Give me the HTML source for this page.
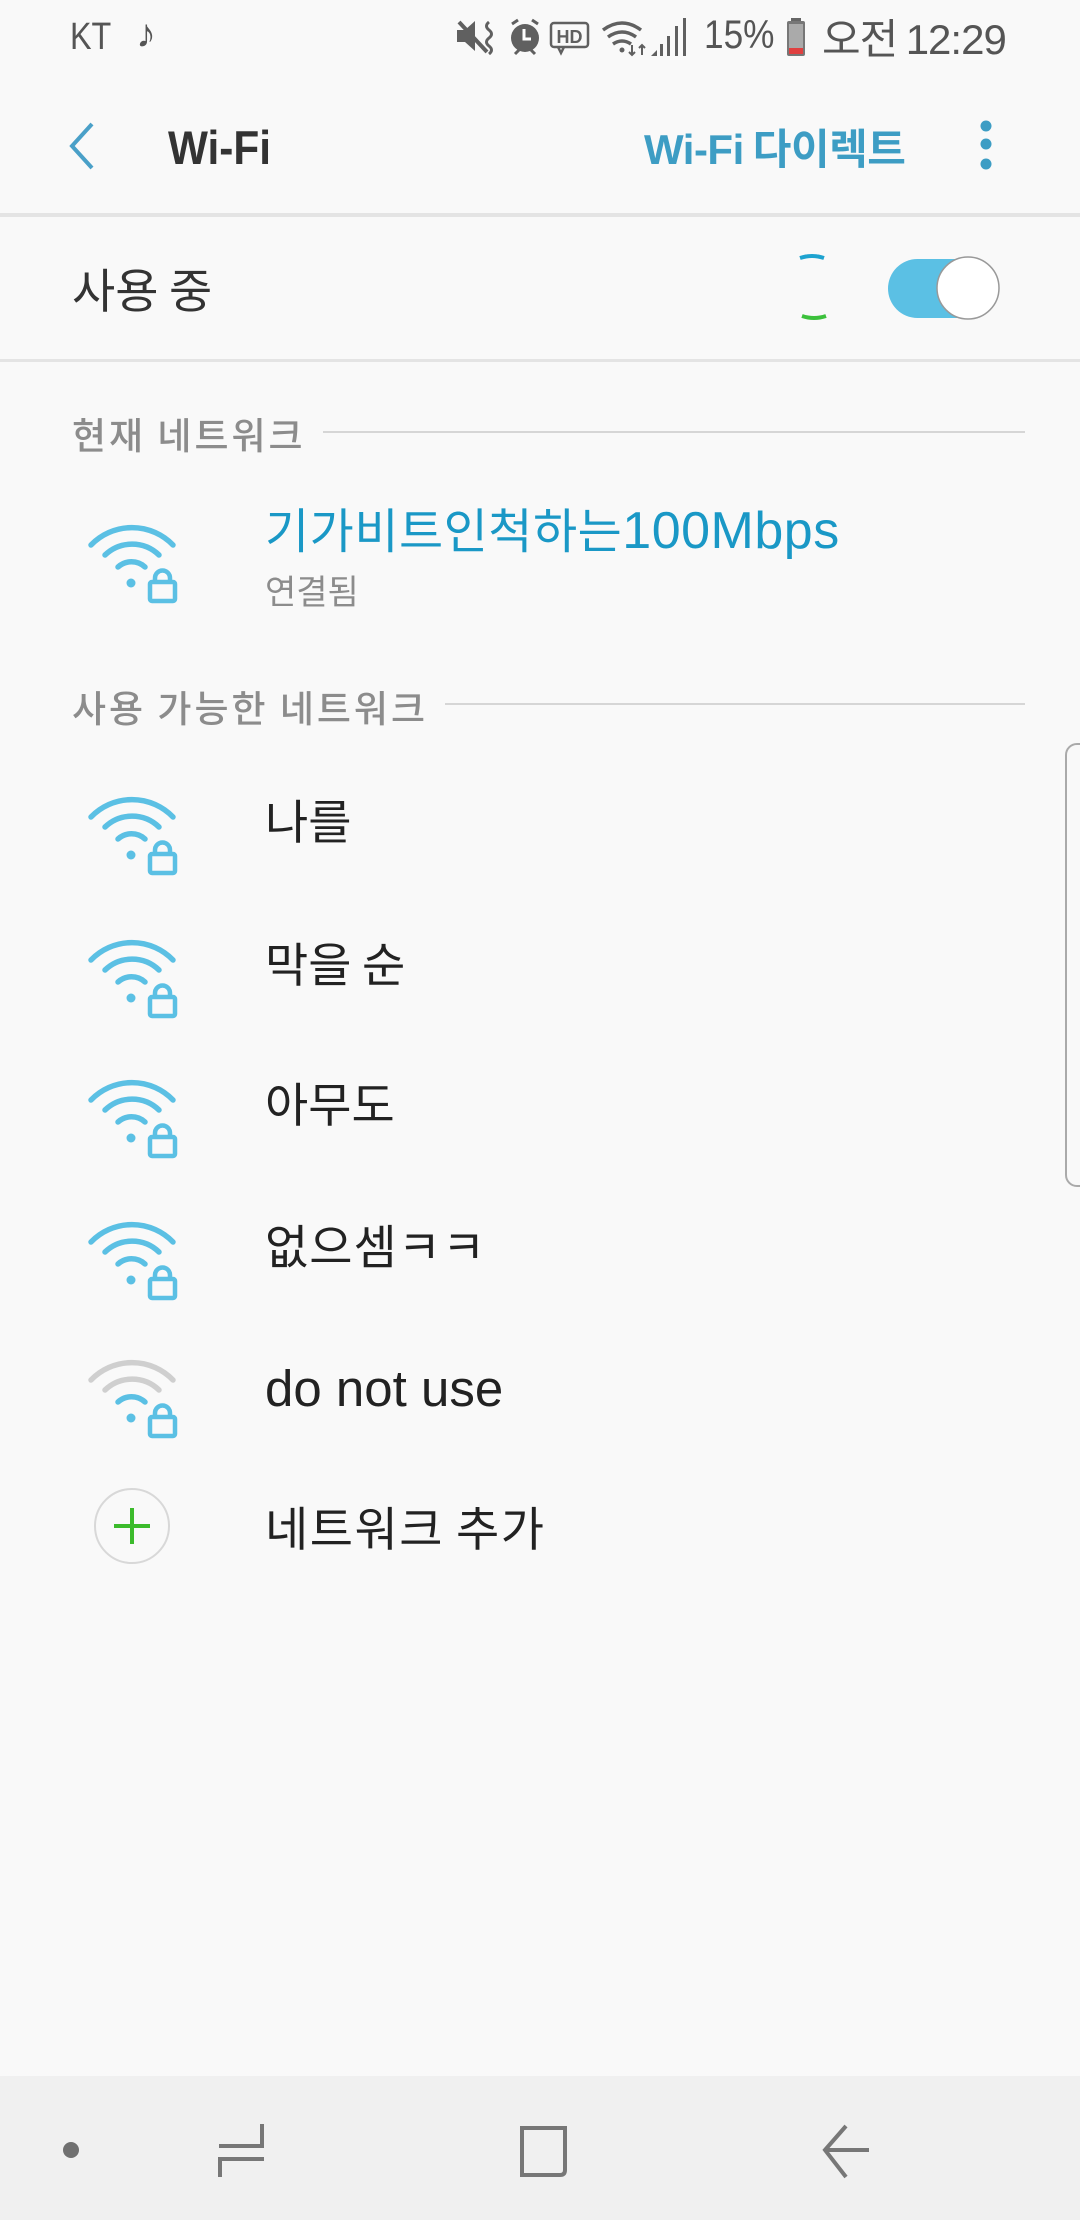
<!DOCTYPE html>
<html><head><meta charset="utf-8"><style>
*{margin:0;padding:0;box-sizing:border-box}
body{width:1080px;height:2220px;background:#f9f9f9;position:relative;overflow:hidden;font-family:"Liberation Sans","Noto Sans CJK KR",sans-serif}
.a{position:absolute;white-space:nowrap}
.k{font-family:"Noto Sans CJK KR","Liberation Sans",sans-serif}
.sec{font-size:37px;color:#8c8c8c;font-weight:500;line-height:1;letter-spacing:3px}
.item{left:265px;font-size:47px;color:#222;line-height:1}
.ln{position:absolute;height:2px;background:#d6d6d6}
</style></head><body>
<!-- status bar -->
<div class="a" style="left:70px;top:16px;font-size:38px;color:#555;transform:scaleX(.85);transform-origin:left">KT</div>
<div class="a" style="left:136px;top:12px;font-size:40px;color:#555">♪</div>
<svg class="a" style="left:455px;top:18px" width="240" height="40" viewBox="0 0 240 40">
<g fill="#606060" stroke="#606060">
<path d="M2 12h8l10-9v30l-10-9H2z" stroke="none"/><path d="M4 4l28 30" stroke-width="4" fill="none"/><path d="M34 4q-5 4 0 8t0 8 0 8 0 8" stroke-width="3" fill="none"/>
<circle cx="70" cy="20" r="14" stroke="none"/><path d="M57 6l6-4M83 6l-6-4M60 36l4-4M80 36l-4-4" stroke-width="3"/><path d="M69 11v10h7" stroke="#fff" stroke-width="3" fill="none"/>
<rect x="96" y="5" width="37" height="24" rx="3" fill="none" stroke-width="2.5"/><path d="M103 29l3 6 3-6" fill="none" stroke-width="2.5"/>
<text x="114.5" y="25" font-size="18" font-weight="bold" text-anchor="middle" stroke="none" font-family="Liberation Sans">HD</text>
<path d="M148 12q19-14 38 0M153 19q14-10 28 0M158 26q9-6 18 0" fill="none" stroke-width="3.5"/><circle cx="167" cy="32" r="2.5" stroke="none"/>
<path d="M177 27v10M174 34l3 3 3-3M187 37v-10M184 30l3-3 3 3" fill="none" stroke-width="2"/>
<path d="M196 38l6-6v6z" stroke="none"/><rect x="205" y="26" width="3" height="12" stroke="none"/><rect x="212" y="18" width="3" height="20" stroke="none"/><rect x="220" y="8" width="3" height="30" stroke="none"/><rect x="228" y="0" width="3" height="38" stroke="none"/>
</g></svg>
<div class="a" style="left:704px;top:13px;font-size:40px;color:#555;transform:scaleX(.88);transform-origin:left">15%</div>
<svg class="a" style="left:786px;top:18px" width="20" height="38"><rect x="5" y="0" width="10" height="4" fill="#666"/><rect x="1" y="3" width="18" height="35" rx="2" fill="#777"/><rect x="3" y="6" width="14" height="24" fill="#aaa"/><rect x="3" y="30" width="14" height="6" fill="#e04040"/></svg>
<div class="a k" style="left:822px;top:6px;font-size:42px;color:#555;letter-spacing:-1px">오전 <span style="font-family:'Liberation Sans';font-size:42px">12:29</span></div>
<!-- header -->
<svg class="a" style="left:64px;top:120px" width="36" height="52"><path d="M28 4L8 26l20 22" fill="none" stroke="#4aa0c8" stroke-width="4"/></svg>
<div class="a" style="left:168px;top:120px;font-size:47px;font-weight:bold;color:#333;transform:scaleX(.9);transform-origin:left">Wi-Fi</div>
<div class="a k" style="left:644px;top:116px;font-size:42px;font-weight:bold;color:#3d9dc4;letter-spacing:-0.5px"><span style="font-family:'Liberation Sans'">Wi-Fi</span> 다이렉트</div>
<svg class="a" style="left:978px;top:120px" width="16" height="50"><circle cx="8" cy="6" r="5.5" fill="#3d9dc4"/><circle cx="8" cy="24" r="5.5" fill="#3d9dc4"/><circle cx="8" cy="44" r="5.5" fill="#3d9dc4"/></svg>
<div class="a" style="left:0;top:213px;width:1080px;height:4px;background:#e4e4e4"></div>
<!-- 사용 중 -->
<div class="a k" style="left:72px;top:264px;font-size:47px;color:#333;line-height:1">사용 중</div>
<svg class="a" style="left:780px;top:240px" width="240" height="100">
<path d="M20 18q12-4 24 0" fill="none" stroke="#1ea3d0" stroke-width="4"/><path d="M22 76q12 4 24 0" fill="none" stroke="#3cc13c" stroke-width="4"/>
<rect x="108" y="19" width="100" height="59" rx="29.5" fill="#5bc0e4"/>
<circle cx="188" cy="48" r="31" fill="#fff" stroke="#999" stroke-width="1.5"/>
</svg>
<div class="a" style="left:0;top:359px;width:1080px;height:3px;background:#e4e4e4"></div>
<!-- current -->
<div class="a sec k" style="left:72px;top:415px">현재 네트워크</div>
<div class="ln" style="left:323px;top:431px;width:702px"></div>
<div class="a k" style="left:265px;top:503px;font-size:48px;color:#1a98c6;line-height:1;letter-spacing:0.5px">기가비트인척하는<span style="font-family:'Liberation Sans';font-size:52px">100Mbps</span></div>
<div class="a k" style="left:265px;top:573px;font-size:34px;color:#8c8c8c;line-height:1">연결됨</div>
<div class="a sec k" style="left:72px;top:688px">사용 가능한 네트워크</div>
<div class="ln" style="left:445px;top:703px;width:580px"></div>
<!-- scroll indicator -->
<div class="a" style="left:1065px;top:743px;width:30px;height:444px;border:2px solid #aaa;border-radius:12px"></div>
<!-- wifi icons -->
<svg width="0" height="0" style="position:absolute"><defs>
<g id="lk"><rect x="79" y="61" width="25" height="19" rx="2" fill="none" stroke="#5bc0e4" stroke-width="4.5"/><path d="M84 61v-4a7.5 7.5 0 0 1 15 0v4" fill="none" stroke="#5bc0e4" stroke-width="4.5"/></g>
</defs></svg>
<svg class="a" style="left:71px;top:521px" width="120" height="84" viewBox="0 0 120 84"><g fill="none" stroke="#5bc0e4" stroke-width="5.5" stroke-linecap="round"><path d="M20 24A57 57 0 0 1 102 24"/><path d="M34 34A39 39 0 0 1 88 34"/><path d="M47 46A20 20 0 0 1 74 46"/></g><circle cx="60" cy="62" r="4.5" fill="#5bc0e4"/><use href="#lk"/></svg>
<svg class="a" style="left:71px;top:793px" width="120" height="84" viewBox="0 0 120 84"><g fill="none" stroke="#5bc0e4" stroke-width="5.5" stroke-linecap="round"><path d="M20 24A57 57 0 0 1 102 24"/><path d="M34 34A39 39 0 0 1 88 34"/><path d="M47 46A20 20 0 0 1 74 46"/></g><circle cx="60" cy="62" r="4.5" fill="#5bc0e4"/><use href="#lk"/></svg>
<svg class="a" style="left:71px;top:936px" width="120" height="84" viewBox="0 0 120 84"><g fill="none" stroke="#5bc0e4" stroke-width="5.5" stroke-linecap="round"><path d="M20 24A57 57 0 0 1 102 24"/><path d="M34 34A39 39 0 0 1 88 34"/><path d="M47 46A20 20 0 0 1 74 46"/></g><circle cx="60" cy="62" r="4.5" fill="#5bc0e4"/><use href="#lk"/></svg>
<svg class="a" style="left:71px;top:1076px" width="120" height="84" viewBox="0 0 120 84"><g fill="none" stroke="#5bc0e4" stroke-width="5.5" stroke-linecap="round"><path d="M20 24A57 57 0 0 1 102 24"/><path d="M34 34A39 39 0 0 1 88 34"/><path d="M47 46A20 20 0 0 1 74 46"/></g><circle cx="60" cy="62" r="4.5" fill="#5bc0e4"/><use href="#lk"/></svg>
<svg class="a" style="left:71px;top:1218px" width="120" height="84" viewBox="0 0 120 84"><g fill="none" stroke="#5bc0e4" stroke-width="5.5" stroke-linecap="round"><path d="M20 24A57 57 0 0 1 102 24"/><path d="M34 34A39 39 0 0 1 88 34"/><path d="M47 46A20 20 0 0 1 74 46"/></g><circle cx="60" cy="62" r="4.5" fill="#5bc0e4"/><use href="#lk"/></svg>
<svg class="a" style="left:71px;top:1356px" width="120" height="84" viewBox="0 0 120 84"><g fill="none" stroke-width="5.5" stroke-linecap="round"><path d="M20 24A57 57 0 0 1 102 24" stroke="#cfcfcf"/><path d="M34 34A39 39 0 0 1 88 34" stroke="#cfcfcf"/><path d="M47 46A20 20 0 0 1 74 46" stroke="#5bc0e4"/></g><circle cx="60" cy="62" r="4.5" fill="#5bc0e4"/><use href="#lk"/></svg>
<!-- items -->
<div class="a item k" style="top:795px">나를</div>
<div class="a item k" style="top:938px">막을 순</div>
<div class="a item k" style="top:1078px">아무도</div>
<div class="a item k" style="top:1220px;letter-spacing:1px">없으셈ㅋㅋ</div>
<div class="a item" style="top:1363px;font-size:51px">do not use</div>
<div class="a" style="left:94px;top:1488px;width:76px;height:76px;border:2px solid #d8d8d8;border-radius:50%"></div>
<svg class="a" style="left:94px;top:1488px" width="76" height="76"><path d="M38 20v36M20 38h36" stroke="#3cbb2c" stroke-width="4"/></svg>
<div class="a item k" style="top:1502px;letter-spacing:1.5px">네트워크 추가</div>
<!-- nav -->
<div class="a" style="left:0;top:2076px;width:1080px;height:144px;background:#f0f0f0"></div>
<svg class="a" style="left:0;top:2076px" width="1080" height="144">
<circle cx="71" cy="74" r="8" fill="#707070"/>
<path d="M262 48v22h-43M220 101v-18h44" fill="none" stroke="#777" stroke-width="4"/>
<path d="M522 99v-47h43v42q0 5-5 5z" fill="none" stroke="#777" stroke-width="4"/>
<path d="M846 50L825 74l21 27M826 74h43" fill="none" stroke="#777" stroke-width="4"/>
</svg>
</body></html>
